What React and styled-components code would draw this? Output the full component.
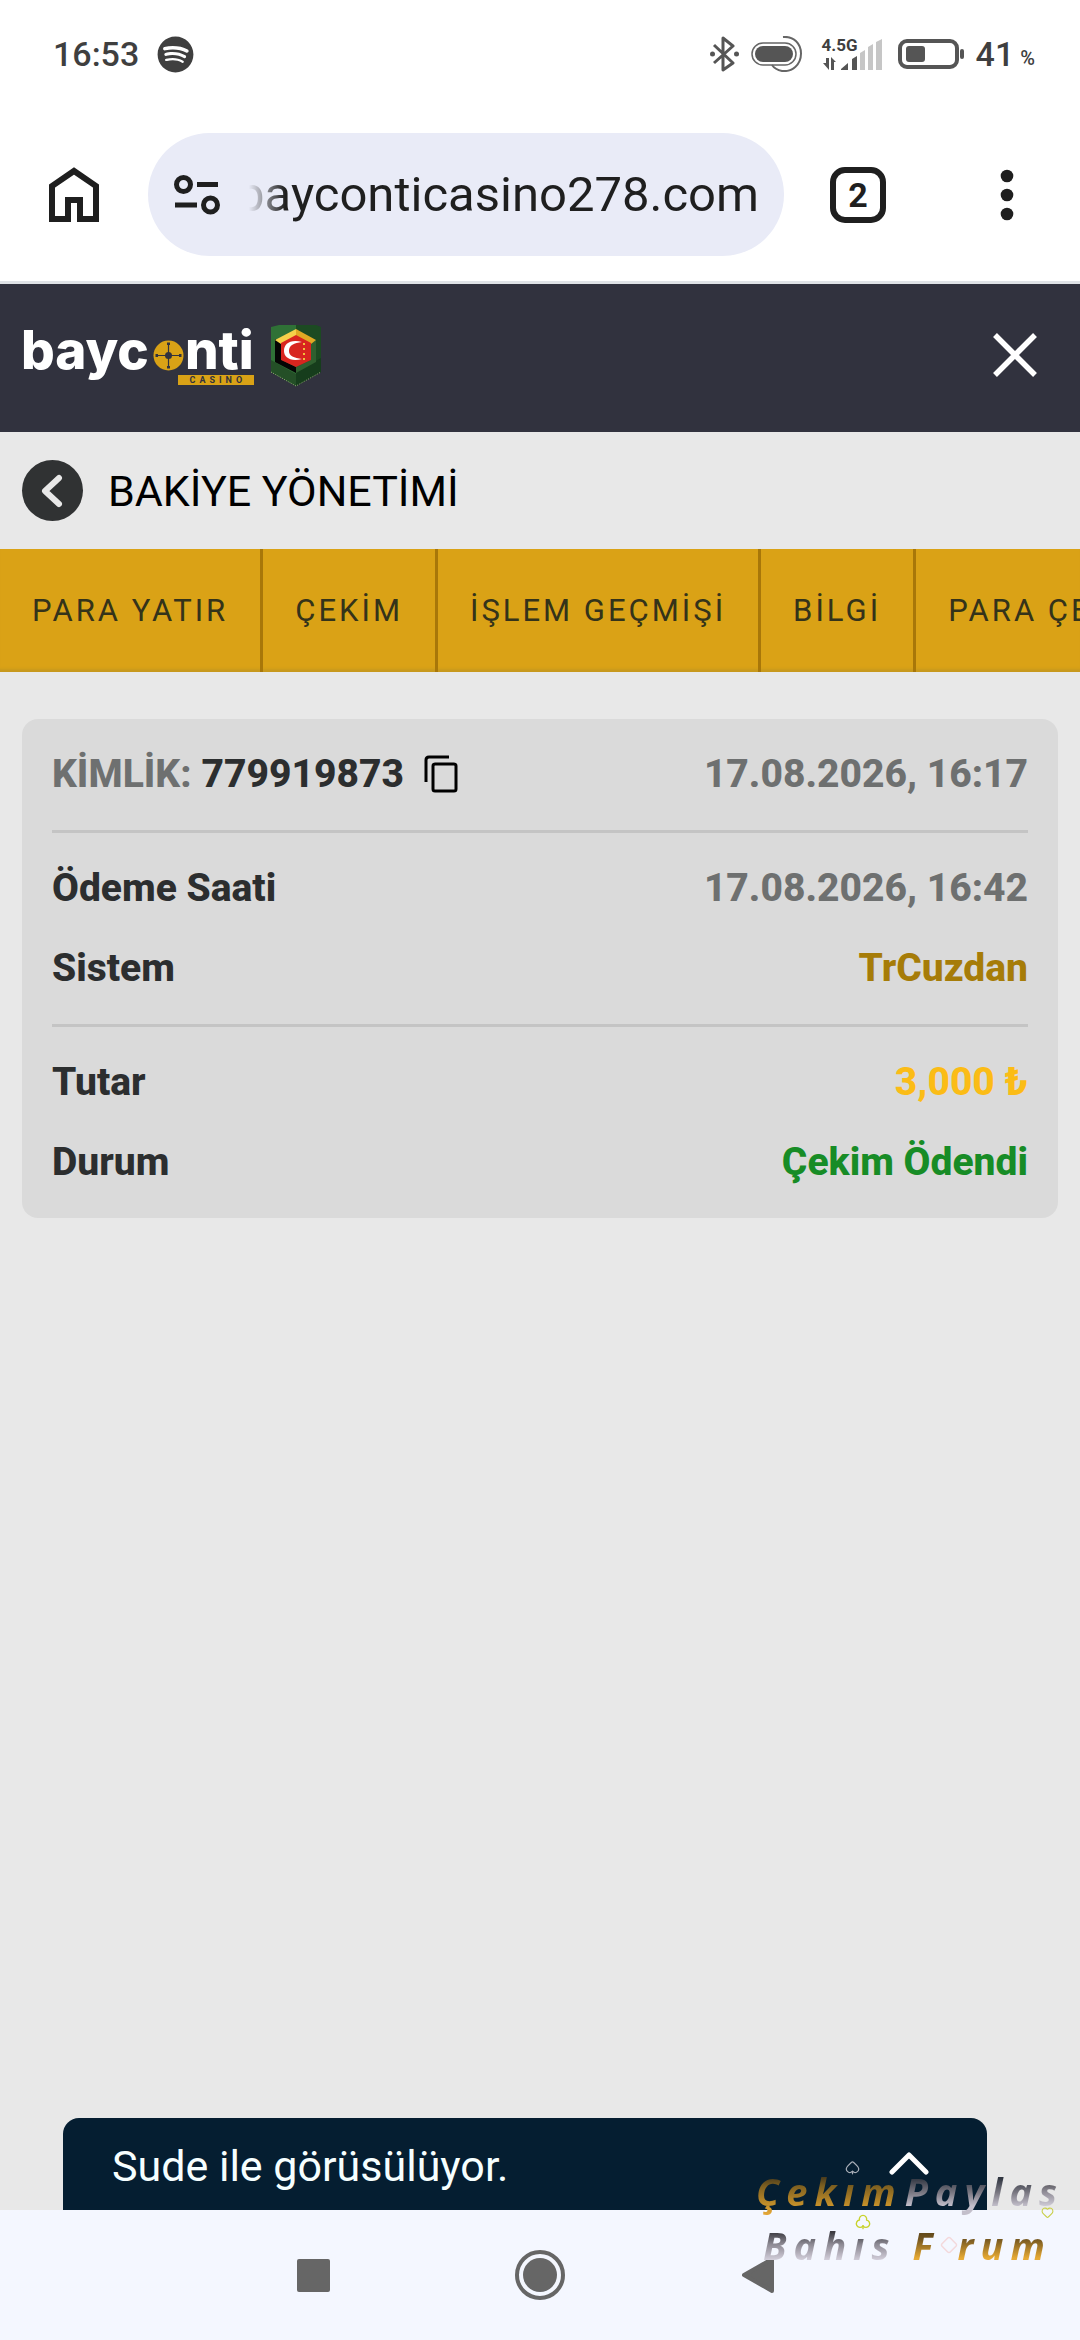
import React from "react";
import styled, { createGlobalStyle } from "styled-components";
import { FaSpotify } from "react-icons/fa";
import { Spade, Club, Heart, Diamond } from "lucide-react";

const GlobalStyle = createGlobalStyle`
  *, *::before, *::after { box-sizing: border-box; }
  body { margin: 0; background: #e8e8e8; font-family: Roboto, "Liberation Sans", sans-serif; }
  h1, dl, dt, dd, p { margin: 0; }
  button, input { font: inherit; color: inherit; background: none; border: 0; padding: 0; }
  svg { display: block; flex: none; }
`;

const Page = styled.div`
  position: relative;
  display: flex;
  flex-direction: column;
  min-height: 100vh;
  overflow: hidden;
`;

/* Phone status bar */
const StatusBar = styled.div`
  display: flex;
  align-items: center;
  justify-content: space-between;
  height: 108px;
  padding: 0 45px 0 53px;
  background: #fff;
  color: #3f3f3f;
  font-size: 34px;
  line-height: 40px;
  font-weight: 500;
`;

const StatusGroup = styled.div`
  display: flex;
  align-items: center;
  gap: ${(p) => p.$gap}px;
`;

const Network = styled.div`
  display: grid;
  width: 64px;
  height: 34px;
  > * { grid-area: 1 / 1; }
`;

const NetworkType = styled.span`
  font-size: 17px;
  line-height: 16px;
  font-weight: 700;
`;

const Percent = styled.span`
  align-self: flex-end;
  font-size: 20px;
  line-height: 32px;
`;

/* Browser toolbar */
const BrowserBar = styled.div`
  display: flex;
  align-items: center;
  height: 176px;
  padding: 0 53px 0 49px;
  background: #fff;
  border-bottom: 3px solid #dfe2e6;
  color: #1f1f1f;
`;

const IconButton = styled.button`
  display: flex;
  align-items: center;
  justify-content: center;
  flex: none;
  color: inherit;
`;

const Omnibox = styled.label`
  display: flex;
  align-items: center;
  gap: 29px;
  flex: 1;
  min-width: 0;
  height: 123px;
  margin: 0 46px 0 49px;
  padding: 0 25px 0 26px;
  border-radius: 62px;
  background: #e9ebf7;
`;

const UrlInput = styled.input`
  flex: 1;
  min-width: 0;
  direction: rtl;
  font-size: 49px;
  line-height: 60px;
  height: 64px;
  outline: 0;
  mask-image: linear-gradient(to right, transparent 0, #000 36px);
`;

const TabCount = styled.button`
  flex: none;
  width: 56px;
  height: 56px;
  border: 6px solid #1f1f1f;
  border-radius: 15px;
  font-size: 34px;
  line-height: 44px;
  font-weight: 700;
  text-align: center;
`;

const MenuButton = styled(IconButton)`
  width: 40px;
  height: 60px;
  margin-left: 101px;
`;

/* Site */
const SiteHeader = styled.header`
  display: flex;
  align-items: center;
  justify-content: space-between;
  height: 148px;
  padding: 0 43px 6px 21px;
  background: #31323e;
  color: #fff;
`;

const Brand = styled.a`
  display: flex;
  align-items: center;
  gap: 17px;
  color: #fff;
  text-decoration: none;
`;

const BrandMark = styled.span`
  display: flex;
  flex-direction: column;
  align-items: flex-end;
`;

const BrandWord = styled.span`
  display: flex;
  align-items: center;
  font-family: Inter, "Liberation Sans", sans-serif;
  font-size: 53px;
  line-height: 50px;
  font-weight: 800;
  svg { margin: 10px 1px 0 4px; }
`;

const BrandTag = styled.span`
  width: 76px;
  padding-left: 4px;
  background: #d9a216;
  color: #31323e;
  font-size: 9px;
  line-height: 10px;
  font-weight: 700;
  letter-spacing: 4px;
  text-align: center;
`;

const TitleBar = styled.div`
  display: flex;
  align-items: center;
  gap: 25px;
  height: 117px;
  padding: 0 22px;
`;

const BackButton = styled(IconButton)`
  width: 61px;
  height: 61px;
  border-radius: 50%;
  background: #303233;
  color: #e8e8e8;
`;

const Title = styled.h1`
  font-size: 43px;
  line-height: 52px;
  font-weight: 400;
  color: #000;
`;

const Tabs = styled.nav`
  display: flex;
  height: 123px;
  overflow: hidden;
  background: #daa216;
  box-shadow: inset 0 -5px 3px -2px #c6981e;
`;

const Tab = styled.a`
  flex: none;
  display: flex;
  align-items: center;
  padding: 0 32px;
  border-right: 3px solid #a87709;
  color: #34331a;
  font-size: 31px;
  line-height: 38px;
  letter-spacing: 3px;
  text-decoration: none;
  white-space: nowrap;
`;

const Main = styled.main`
  flex: 1;
  padding: 47px 22px;
`;

const Card = styled.section`
  padding: 0 30px;
  border-radius: 16px;
  background: #dadada;
`;

const Group = styled.dl`
  display: flex;
  flex-direction: column;
  gap: 36px;
  padding: 33px 0 34px;
  & + & { border-top: 3px solid #c4c4c4; }
`;

const Row = styled.div`
  display: flex;
  align-items: center;
  justify-content: space-between;
  height: 44px;
  font-size: 39px;
  line-height: 44px;
  font-weight: 800;
`;

const Term = styled.dt`
  color: #2c2e2f;
`;

const tones = {
  muted: "#6e7070",
  dark: "#2c2e2f",
  bronze: "#a67c08",
  gold: "#fbbc16",
  green: "#178c26",
};

const Value = styled.dd`
  color: ${(p) => tones[p.$tone]};
`;

const Identity = styled.div`
  display: flex;
  align-items: center;
  color: ${tones.muted};
  ${Value} { margin: 0 20px 0 10px; }
  ${Term} { color: inherit; }
`;

const ChatBar = styled.button`
  display: flex;
  align-items: center;
  justify-content: space-between;
  height: 92px;
  margin: 0 93px 0 63px;
  padding: 0 58px 0 49px;
  border-radius: 16px 16px 0 0;
  background: #051e31;
  color: #f6ffff;
  font-size: 43px;
  line-height: 52px;
`;

const ChatText = styled.span`
  padding-top: 4px;
`;

const SystemNav = styled.nav`
  display: flex;
  align-items: center;
  justify-content: center;
  gap: 177px;
  height: 130px;
  background: #f4f7ff;
  color: #666;
`;

const NavButton = styled(IconButton)`
  width: 50px;
  height: 50px;
`;

/* Watermark laid over the lower right corner */
const Watermark = styled.div`
  position: absolute;
  right: 0;
  bottom: 68px;
  width: 324px;
  font-family: "Open Sans", "Liberation Sans", sans-serif;
  font-size: 38px;
  line-height: 54px;
  font-style: italic;
  font-weight: 700;
  letter-spacing: 7px;
  pointer-events: none;
`;

const MarkLine = styled.p`
  display: flex;
  align-items: center;
  gap: ${(p) => p.$gap}px;
  padding-left: ${(p) => p.$indent}px;
  white-space: nowrap;
`;

const MarkWord = styled.span`
  display: flex;
  align-items: center;
`;

const metals = {
  gold: "linear-gradient(#5a4316 12px, #6e5220 20px, #e6a933 40px, #eeb14a)",
  darkGold: "linear-gradient(#43371d 12px, #7d5f20 22px, #c8922a 42px, #f0b040)",
  darkSilver: "linear-gradient(#2f3540 14px, #77757f 28px, #c3bfcb 42px)",
  silver: "linear-gradient(#3b3a40 14px, #8b8892 26px, #d3cfdb 42px)",
};

const Metal = styled.span`
  background: ${(p) => metals[p.$metal]};
  background-clip: text;
  -webkit-background-clip: text;
  color: transparent;
`;

const Letter = styled.span`
  position: relative;
`;

const Suit = styled.span`
  position: absolute;
  left: 2px;
  top: ${(p) => p.$top}px;
  color: ${(p) => p.$color};
`;

const HomeIcon = () => (
  <svg width="50" height="55" viewBox="0 0 50 55" fill="none" stroke="currentColor" strokeWidth="6">
    <path d="M3 52H19V33H31V52H47V19L25 4L3 19Z" />
  </svg>
);

const TuneIcon = () => (
  <svg width="46" height="40" viewBox="0 0 46 40" fill="none" stroke="#1f1f1f" strokeWidth="5">
    <circle cx="9.500" cy="9.500" r="7" />
    <circle cx="36.500" cy="30" r="7" />
    <path d="M23 9.500H44M1 30H23" />
  </svg>
);

const DotsIcon = () => (
  <svg width="14" height="52" viewBox="0 0 14 52" fill="currentColor">
    <circle cx="7" cy="7" r="6.300" />
    <circle cx="7" cy="26" r="6.300" />
    <circle cx="7" cy="45" r="6.300" />
  </svg>
);

const BluetoothIcon = () => (
  <svg width="29" height="36" viewBox="0 0 29 36" fill="none" stroke="#555" strokeWidth="3" strokeLinejoin="round">
    <path d="M4 9L23 27L13 34V2L23 10L4 27" />
    <circle cx="2.500" cy="18" r="2.500" fill="#555" stroke="none" />
    <circle cx="26.500" cy="18" r="2.500" fill="#555" stroke="none" />
  </svg>
);

const PillIcon = () => (
  <svg width="59" height="36" viewBox="0 0 59 36" fill="none" stroke="#666" strokeWidth="1.500">
    <rect x="1" y="7" width="44" height="22" rx="11" />
    <rect x="4" y="10" width="38" height="16" rx="8" fill="#555" stroke="none" />
    <path d="M32 1C43 0 50 8 50 17.500C50 29 41 36 31 35C26 34 23 32 21 29" strokeWidth="2" />
  </svg>
);

const SignalIcon = () => (
  <svg width="64" height="34" viewBox="0 0 64 34">
    <g fill="#555">
      <path d="M4 21H7V33L1 26H4ZM9 20L14 25H12V33H9Z" />
      <path d="M19 32L26 26V33H19ZM30 22L35 19V33H30Z" />
    </g>
    <path fill="#c6c6c6" d="M38 16L43 13V33H38ZM46 10L51 7V33H46ZM54 5L60 2V33H54Z" />
  </svg>
);

const BatteryIcon = () => (
  <svg width="66" height="32" viewBox="0 0 66 32">
    <rect x="2" y="3" width="57" height="26" rx="7" fill="none" stroke="#555" strokeWidth="4" />
    <rect x="8" y="8" width="19" height="16" rx="3" fill="#555" />
    <rect x="62" y="11" width="4" height="10" rx="2" fill="#555" />
  </svg>
);

const CrosshairIcon = () => (
  <svg width="31" height="31" viewBox="0 0 31 31" stroke="#31323e" strokeWidth="1.200">
    <circle cx="15.500" cy="15.500" r="15" fill="#d9a216" stroke="none" />
    <path d="M3 15.500H28M15.500 3V28" />
    <path d="M15.500 2.500V5M15.500 26V28.500M2.500 15.500H5M26 15.500H28.500" strokeWidth="3" />
    <circle cx="15.500" cy="15.500" r="3.500" fill="#31323e" stroke="none" />
  </svg>
);

const BadgeIcon = () => (
  <svg width="50" height="63" viewBox="0 0 50 63">
    <path fill="#2f7136" d="M0 3L8 1H25V62L0 48Z" />
    <path fill="#1c4a22" d="M25 1H45L50 3V48L25 62Z" />
    <path fill="#163d1c" d="M25 48L50 34V48L25 62Z" />
    <path fill="#244f27" d="M0 36L25 50V62L0 48Z" />
    <path fill="#050505" d="M4 15L11 19V36L25 43V49L4 38Z" />
    <path fill="#2f5f2f" d="M45 16L40 19V36L25 43V49L45 38Z" />
    <path fill="#f6d04a" d="M25 5L4 16L10 20L25 12Z" />
    <path fill="#e0a924" d="M25 5L45 16L40 20L25 12Z" />
    <path fill="#d8251f" d="M25 11L40 19V36L25 43L10 36V19Z" />
    <path fill="#fff" d="M31 18C19 15 13 20 13 27C13 33 19 38 31 35C23 34 18 32 18 27C18 21 23 19 31 18Z" />
    <path stroke="#f0c13c" strokeWidth="2" strokeDasharray="2 3" d="M33 19V36" />
    <path fill="none" stroke="#b6c98a" strokeWidth="0.800" strokeDasharray="1 1.500" d="M0 48L25 62L50 48" />
  </svg>
);

const CloseIcon = () => (
  <svg width="44" height="44" viewBox="0 0 44 44" stroke="#fff" strokeWidth="5.500">
    <path d="M2 2L42 42M42 2L2 42" />
  </svg>
);

const BackIcon = () => (
  <svg width="26" height="34" viewBox="0 0 26 34" fill="none" stroke="currentColor" strokeWidth="6" strokeLinecap="round" strokeLinejoin="round">
    <path d="M19 4L5 17L19 30" />
  </svg>
);

const CopyIcon = () => (
  <svg width="34" height="38" viewBox="0 0 34 38" fill="none" stroke="#000" strokeWidth="3">
    <path d="M25 2H5Q2 2 2 5V27" />
    <rect x="9" y="9" width="23" height="27" rx="2" />
  </svg>
);

const ChevronUp = () => (
  <svg width="40" height="24" viewBox="0 0 40 24" fill="none" stroke="#fff" strokeWidth="5" strokeLinecap="round" strokeLinejoin="round">
    <path d="M3 20L20 3L37 20" />
  </svg>
);

const tabs = ["PARA YATIR", "ÇEKİM", "İŞLEM GEÇMİŞİ", "BİLGİ", "PARA ÇEKME"];

const details = [
  [
    { term: "Ödeme Saati", value: "17.08.2026, 16:42", tone: "muted" },
    { term: "Sistem", value: "TrCuzdan", tone: "bronze" },
  ],
  [
    { term: "Tutar", value: "3,000 ₺", tone: "gold" },
    { term: "Durum", value: "Çekim Ödendi", tone: "green" },
  ],
];

export default function App() {
  return (
    <Page>
      <GlobalStyle />
      <StatusBar>
        <StatusGroup $gap={18}>
          <span>16:53</span>
          <FaSpotify size={37} />
        </StatusGroup>
        <StatusGroup $gap={12}>
          <BluetoothIcon />
          <PillIcon />
          <Network>
            <SignalIcon />
            <NetworkType>4.5G</NetworkType>
          </Network>
          <BatteryIcon />
          <StatusGroup $gap={6}>
            <span>41</span>
            <Percent>%</Percent>
          </StatusGroup>
        </StatusGroup>
      </StatusBar>

      <BrowserBar>
        <IconButton aria-label="Ana sayfa"><HomeIcon /></IconButton>
        <Omnibox>
          <TuneIcon />
          <UrlInput type="text" aria-label="Adres" defaultValue="bayconticasino278.com" />
        </Omnibox>
        <TabCount>2</TabCount>
        <MenuButton aria-label="Menü"><DotsIcon /></MenuButton>
      </BrowserBar>

      <SiteHeader>
        <Brand href="#">
          <BrandMark>
            <BrandWord>
              <span>bayc</span>
              <CrosshairIcon />
              <span>nti</span>
            </BrandWord>
            <BrandTag>CASINO</BrandTag>
          </BrandMark>
          <BadgeIcon />
        </Brand>
        <IconButton aria-label="Kapat"><CloseIcon /></IconButton>
      </SiteHeader>

      <TitleBar>
        <BackButton aria-label="Geri"><BackIcon /></BackButton>
        <Title>BAKİYE YÖNETİMİ</Title>
      </TitleBar>

      <Tabs>
        {tabs.map((label) => (
          <Tab key={label} href="#">{label}</Tab>
        ))}
      </Tabs>

      <Main>
        <Card>
          <Group>
            <Row>
              <Identity>
                <Term>KİMLİK:</Term>
                <Value $tone="dark">779919873</Value>
                <IconButton aria-label="Kopyala"><CopyIcon /></IconButton>
              </Identity>
              <Value $tone="muted">17.08.2026, 16:17</Value>
            </Row>
          </Group>
          {details.map((rows) => (
            <Group key={rows[0].term}>
              {rows.map((row) => (
                <Row key={row.term}>
                  <Term>{row.term}</Term>
                  <Value $tone={row.tone}>{row.value}</Value>
                </Row>
              ))}
            </Group>
          ))}
        </Card>
      </Main>

      <ChatBar>
        <ChatText>Sude ile görüsülüyor.</ChatText>
        <ChevronUp />
      </ChatBar>

      <SystemNav>
        <NavButton aria-label="Son uygulamalar">
          <svg width="33" height="33" fill="currentColor"><rect width="33" height="33" rx="2" /></svg>
        </NavButton>
        <NavButton aria-label="Ana ekran">
          <svg width="50" height="50" fill="currentColor">
            <circle cx="25" cy="25" r="23" fill="none" stroke="currentColor" strokeWidth="4" />
            <circle cx="25" cy="25" r="17" />
          </svg>
        </NavButton>
        <NavButton aria-label="Geri dön">
          <svg width="50" height="38" viewBox="1 0 50 38" fill="currentColor" stroke="currentColor" strokeWidth="4" strokeLinejoin="round">
            <path d="M3 19L31 3V35Z" />
          </svg>
        </NavButton>
      </SystemNav>

      <Watermark>
        <MarkLine $gap={2} $indent={0}>
          <MarkWord>
            <Metal $metal="darkGold">Çek</Metal>
            <Letter>
              <Metal $metal="darkGold">ı</Metal>
              <Suit $top={-4} $color="#a9afb8"><Spade size={15} strokeWidth={2} /></Suit>
            </Letter>
            <Metal $metal="darkGold">m</Metal>
          </MarkWord>
          <MarkWord>
            <Metal $metal="darkSilver">Payla</Metal>
            <Letter>
              <Metal $metal="silver">s</Metal>
              <Suit $top={42} $color="#c9cf4a"><Heart size={13} strokeWidth={2} /></Suit>
            </Letter>
          </MarkWord>
        </MarkLine>
        <MarkLine $gap={16} $indent={7}>
          <MarkWord>
            <Metal $metal="silver">Bah</Metal>
            <Letter>
              <Metal $metal="silver">ı</Metal>
              <Suit $top={-4} $color="#c8d22c"><Club size={16} strokeWidth={2} /></Suit>
            </Letter>
            <Metal $metal="silver">s</Metal>
          </MarkWord>
          <MarkWord>
            <Metal $metal="gold">F</Metal>
            <Diamond size={18} color="#f3d9dc" />
            <Metal $metal="gold">rum</Metal>
          </MarkWord>
        </MarkLine>
      </Watermark>
    </Page>
  );
}
